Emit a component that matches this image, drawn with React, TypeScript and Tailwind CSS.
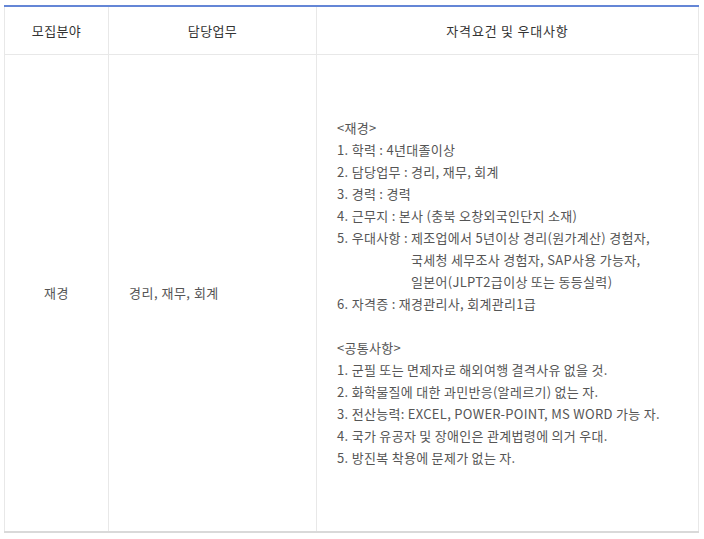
const lines1 = [
  "<재경>",
  "1. 학력 : 4년대졸이상",
  "2. 담당업무 : 경리, 재무, 회계",
  "3. 경력 : 경력",
  "4. 근무지 : 본사 (충북 오창외국인단지 소재)",
  "5. 우대사항 : 제조업에서 5년이상 경리(원가계산) 경험자,",
];

const indented = ["국세청 세무조사 경험자, SAP사용 가능자,", "일본어(JLPT2급이상 또는 동등실력)"];

const lines2 = [
  "6. 자격증 : 재경관리사, 회계관리1급",
];

const common = [
  "<공통사항>",
  "1. 군필 또는 면제자로 해외여행 결격사유 없을 것.",
  "2. 화학물질에 대한 과민반응(알레르기) 없는 자.",
  "3. 전산능력: EXCEL, POWER-POINT, MS WORD 가능 자.",
  "4. 국가 유공자 및 장애인은 관계법령에 의거 우대.",
  "5. 방진복 착용에 문제가 없는 자.",
];

export default function App() {
  return (
    <div
      className="bg-white w-[704px] h-[539px] pt-[5px] pl-[4px]"
      style={{ fontFamily: '"Noto Sans CJK KR", "Noto Sans", sans-serif' }}
    >
      <table className="w-[695px] border-collapse table-fixed border-t-2 border-t-[#6486d6] border-b-2 border-b-[#d9d9d9]">
        <colgroup>
          <col className="w-[104px]" />
          <col className="w-[208px]" />
          <col />
        </colgroup>
        <thead>
          <tr className="h-[48px]">
            <th className="border border-[#e8e8e8] border-t-0 text-[13px] font-normal text-[#333] text-center tracking-[0.4px]">모집분야</th>
            <th className="border border-[#e8e8e8] border-t-0 text-[13px] font-normal text-[#333] text-center tracking-[0.4px]">담당업무</th>
            <th className="border border-[#e8e8e8] border-t-0 text-[13px] font-normal text-[#333] text-center tracking-[0.8px]">자격요건 및 우대사항</th>
          </tr>
        </thead>
        <tbody>
          <tr className="h-[478px]">
            <td className="border border-[#e8e8e8] border-b-0 text-[13px] text-[#555] text-center align-middle tracking-[0.5px]">재경</td>
            <td className="border border-[#e8e8e8] border-b-0 text-[13px] text-[#555] pl-[20px] align-middle tracking-[0.5px]">경리, 재무, 회계</td>
            <td className="border border-[#e8e8e8] border-b-0 text-[13px] text-[#555] pl-[20px] align-middle leading-[22px] tracking-[0.3px]">
              {lines1.map((l) => (
                <div key={l} className="whitespace-pre">{l}</div>
              ))}
              {indented.map((l) => (
                <div key={l} className="pl-[74px] whitespace-pre">{l}</div>
              ))}
              {lines2.map((l) => (
                <div key={l}>{l}</div>
              ))}
              <div className="h-[22px]" />
              {common.map((l) => (
                <div key={l}>{l}</div>
              ))}
            </td>
          </tr>
        </tbody>
      </table>
    </div>
  );
}
